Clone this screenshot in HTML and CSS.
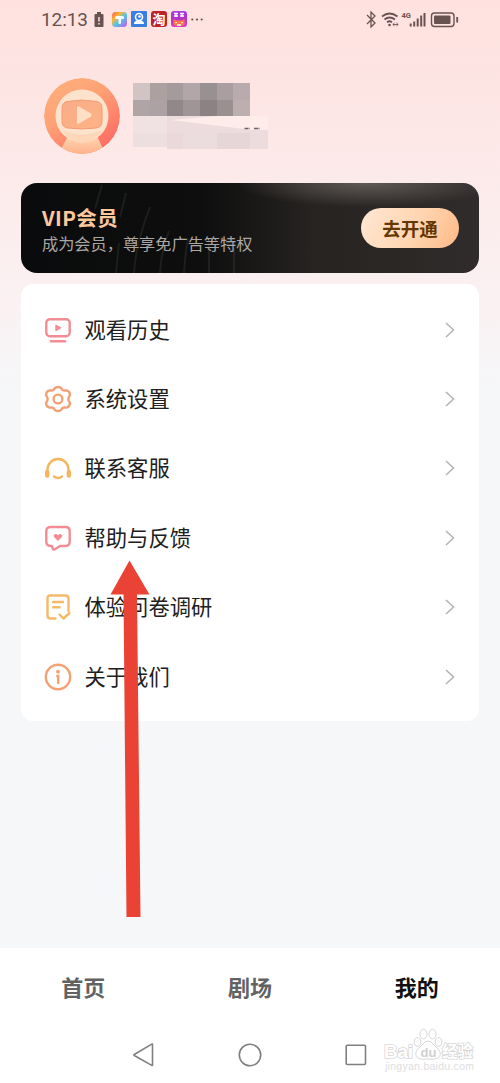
FILE: index.html
```html
<!DOCTYPE html>
<html lang="zh-CN">
<head>
  <meta charset="UTF-8">
  <title>我的</title>
  <link rel="stylesheet" href="styles.css">
</head>
<body>
  <div class="phone">
    <!-- Status bar -->
    <div class="status-bar">
      <div class="status-left">
        <span class="time">12:13</span>
        <svg class="low-battery" width="10" height="15" viewBox="0 0 10 15">
          <path d="M3 0h4v2h1.500q1 0 1 1v11q0 1-1 1h-7q-1 0-1-1V3q0-1 1-1H3z" fill="#685351"/>
          <path d="M5 5v4.500M5 11v1.500" stroke="#fde4e1" stroke-width="1.500"/>
        </svg>
        <svg class="app" width="15" height="15" viewBox="0 0 15 15">
          <defs>
            <linearGradient id="rainbow" x1="0" y1="0" x2="1" y2="1">
              <stop offset="0" stop-color="#ff5a5f"/>
              <stop offset=".3" stop-color="#ffb52e"/>
              <stop offset=".55" stop-color="#4cc7e8"/>
              <stop offset="1" stop-color="#d052ee"/>
            </linearGradient>
          </defs>
          <rect width="15" height="15" rx="3.500" fill="url(#rainbow)"/>
          <path d="M4.500 4h6q1.500 0 1.500 1.500v.5q0 1-1 1H9v4q0 1-1 1h-.500q-1 0-1-1V7H4q-1 0-1-1v-.500Q3 4 4.500 4z" fill="#fff"/>
        </svg>
        <svg class="app" width="16" height="16" viewBox="0 0 16 16">
          <rect width="16" height="16" rx="1" fill="#397ee3"/>
          <circle cx="8" cy="6" r="3.500" fill="none" stroke="#fff" stroke-width="1.600"/>
          <circle cx="8.500" cy="5.500" r="1.300" fill="#fff"/>
          <path d="M3 13q0-3 3-3.500h4q3 .5 3 3.500z" fill="#fff"/>
        </svg>
        <span class="app app-tao">淘</span>
        <svg class="app" width="16" height="16" viewBox="0 0 16 16">
          <defs>
            <linearGradient id="cat" x1="0" y1="0" x2="0" y2="1">
              <stop offset="0" stop-color="#a53be0"/>
              <stop offset=".5" stop-color="#b433c9"/>
              <stop offset="1" stop-color="#d841c0"/>
            </linearGradient>
          </defs>
          <rect width="16" height="16" rx="3" fill="url(#cat)"/>
          <path d="M3 2.500h4M3 5h4M5 2v4M9 2.500h4M9 5h4M11 2v4" stroke="#fff" stroke-width="1.300"/>
          <path d="M2.500 8l3 1.500h5l3-1.500v5q-1 2-5.500 2t-5.500-2z" fill="#ff754b"/>
          <path d="M4 12q1-1.500 2 0M10 12q1-1.500 2 0" stroke="#fff0c4" fill="none"/>
          <path d="M6 14h4" stroke="#fff" stroke-width="1.500"/>
        </svg>
        <svg class="more" width="12" height="3" viewBox="0 0 12 3" fill="#685351">
          <circle cx="1.300" cy="1.500" r="1.100"/><circle cx="6" cy="1.500" r="1.100"/><circle cx="10.700" cy="1.500" r="1.100"/>
        </svg>
      </div>
      <svg class="status-right" width="94" height="18" viewBox="0 0 94 18" fill="none" stroke="#685351">
        <path d="M2 5l8 8-4 4V2l4 4-8 8" stroke-width="1.300"/>
        <g stroke-width="1.800">
          <path d="M17 6.500q7.500-6 15.500 0M19.500 9.500q5-4 10.500 0M22 12.300q2.800-2 5 0"/>
        </g>
        <circle cx="24.500" cy="15" r="1.300" fill="#685351" stroke="none"/>
        <path d="M28 14.500h5M29.500 13l-1.700 1.500 1.700 1.500M31.500 13l1.700 1.500-1.700 1.500" stroke-width=".9"/>
        <text x="36.500" y="7.500" class="net">4G</text>
        <path d="M45.700 13.500v3M49.200 11.500v5M52.700 8.500v8M56.200 5.500v11M59.500 3v13.500" stroke-width="2"/>
        <rect x="66.500" y="3" width="22.500" height="13.500" rx="3" stroke-width="1.400"/>
        <rect x="69" y="5.500" width="16.500" height="8.500" rx="1" fill="#685351" stroke="none"/>
        <path d="M92.200 7v5.500" stroke-width="1.800"/>
      </svg>
    </div>

    <!-- Profile -->
    <div class="profile">
      <svg class="avatar" width="76" height="76" viewBox="0 0 76 76">
        <defs>
          <linearGradient id="ring" x1="0" y1="0" x2=".7" y2="1">
            <stop offset="0" stop-color="#ffb27d"/>
            <stop offset=".45" stop-color="#fea276"/>
            <stop offset="1" stop-color="#fe6c63"/>
          </linearGradient>
          <linearGradient id="neck" x1="0" y1="0" x2="0" y2="1">
            <stop offset="0" stop-color="#fed5b4"/>
            <stop offset="1" stop-color="#feb087"/>
          </linearGradient>
          <linearGradient id="face" x1="0" y1="0" x2="1" y2="1">
            <stop offset="0" stop-color="#f8ad88"/>
            <stop offset="1" stop-color="#ffb285"/>
          </linearGradient>
          <clipPath id="round"><circle cx="38" cy="38" r="38"/></clipPath>
        </defs>
        <g clip-path="url(#round)">
          <circle cx="38" cy="38" r="38" fill="url(#ring)"/>
          <path d="M24 58h29l6 13q-9 6-21 6t-21-6z" fill="url(#neck)"/>
          <circle cx="38" cy="38" r="26.500" fill="#fee3cc"/>
          <path d="M18 52q20 9 40 0-7 12.500-20 12.500T18 52z" fill="#fed6b8"/>
          <path d="M23 23.500q15-3 30 0 5 1 5 7v13q0 6-6 6.500-14 2-28 0-6-.5-6-6.500v-13q0-6 5-7z" fill="url(#face)" stroke="#f29b77"/>
          <path d="M33 29.500q0-2 2-1L47 35.500q1.500 1.500 0 3L35 45.500q-2 1-2-1z" fill="#ffe0c5"/>
        </g>
      </svg>
      <!-- Masked nickname and id -->
      <svg class="masked" width="136" height="68" viewBox="0 0 136 68">
        <rect x="0" y="1" width="17" height="17" fill="#d2c3c4"/>
        <rect x="17" y="1" width="17" height="17" fill="#aca0a1"/>
        <rect x="34" y="1" width="16" height="17" fill="#a69b9c"/>
        <rect x="50" y="1" width="17" height="17" fill="#b3a6a8"/>
        <rect x="67" y="1" width="17" height="17" fill="#999091"/>
        <rect x="84" y="1" width="16" height="17" fill="#aa9ea0"/>
        <rect x="100" y="1" width="17" height="17" fill="#b9abad"/>
        <rect x="0" y="18" width="17" height="16" fill="#b0a5a6"/>
        <rect x="17" y="18" width="17" height="16" fill="#ada1a3"/>
        <rect x="34" y="18" width="16" height="16" fill="#928889"/>
        <rect x="50" y="18" width="17" height="16" fill="#9f9496"/>
        <rect x="67" y="18" width="17" height="16" fill="#8c8283"/>
        <rect x="84" y="18" width="16" height="16" fill="#9a9092"/>
        <rect x="100" y="18" width="17" height="16" fill="#bdaeb0"/>
        <rect x="0" y="34" width="34" height="17" fill="#f0e1e2"/>
        <rect x="34" y="34" width="83" height="17" fill="#ecdcde"/>
        <rect x="0" y="51" width="34" height="14" fill="#eddfe0"/>
        <rect x="34" y="51" width="16" height="16" fill="#e9d9db"/>
        <rect x="50" y="51" width="34" height="16" fill="#ebdcdd"/>
        <rect x="84" y="51" width="33" height="16" fill="#e7d6d8"/>
        <rect x="117" y="48" width="18" height="19" fill="#ecdcde"/>
        <path d="M38 38L84 34h51v14l-24-1z" fill="#fdecea"/>
        <path d="M111.500 46.500h5M121 46.500h5.500" stroke="#6b6465" stroke-width="1.300" stroke-dasharray="4 .5"/>
      </svg>
    </div>

    <!-- VIP banner -->
    <div class="vip">
      <svg class="vip-rays" width="458" height="90" viewBox="0 0 458 90" fill="none" stroke="#fff" stroke-opacity=".07" stroke-width="2">
        <path d="M81 2L74 26M105 10L99 34M129 24Q115 60 113 90M98 60l-3 30M148 48q-8 20-9 42M167 55q-3 18-4 35M188 60v30M213 65v25"/>
      </svg>
      <div class="vip-text">
        <div class="vip-title">VIP会员</div>
        <div class="vip-subtitle">成为会员，尊享免广告等特权</div>
      </div>
      <button type="button" class="vip-btn">去开通</button>
    </div>

    <!-- Menu -->
    <div class="menu">
      <div class="item">
        <svg class="icon" viewBox="0 0 28 28" fill="none" stroke="#f28d96" stroke-width="2.400" stroke-linecap="round">
          <rect x="2.300" y="3.300" width="23.400" height="17" rx="3.500"/>
          <path d="M7 25.300h14"/>
          <path d="M12 9.300v5l4.500-2.500z" fill="#f28d96" stroke-width="1.500" stroke-linejoin="round"/>
        </svg>
        <span class="label">观看历史</span>
        <svg class="chevron" viewBox="0 0 10 16"><path d="M1 1l7.500 7L1 15"/></svg>
      </div>
      <div class="item">
        <svg class="icon" viewBox="0 0 28 28" fill="none" stroke="#f3a077" stroke-width="2.400" stroke-linejoin="round">
          <path d="M11 3Q14 .8 17 3l1.500 2q1 .7 2.300.5l1.700-.1q3.200.6 3.500 4.600l-1.300 2.400q-.7 1.600 0 3.200L26 18q-.3 4-3.500 4.600l-1.700-.1q-1.300-.2-2.300.5L17 25q-3 2.200-6 0l-1.500-2q-1-.7-2.300-.5l-1.700.1Q2.300 22 2 18l1.300-2.400q.7-1.600 0-3.200L2 10q.3-4 3.500-4.600l1.700.1q1.300.2 2.300-.5z"/>
          <circle cx="14" cy="14" r="4.400"/>
        </svg>
        <span class="label">系统设置</span>
        <svg class="chevron" viewBox="0 0 10 16"><path d="M1 1l7.500 7L1 15"/></svg>
      </div>
      <div class="item">
        <svg class="icon" viewBox="0 0 28 28" fill="none" stroke="#f6b45c" stroke-width="2.300" stroke-linecap="round">
          <path d="M3.500 18v-2.500a10.500 10.500 0 0 1 21 0V18"/>
          <path d="M3.200 18v3.500M24.800 18v3.500" stroke-width="4.400"/>
          <path d="M10 22.500q4 3 8 0"/>
        </svg>
        <span class="label">联系客服</span>
        <svg class="chevron" viewBox="0 0 10 16"><path d="M1 1l7.500 7L1 15"/></svg>
      </div>
      <div class="item">
        <svg class="icon" viewBox="0 0 28 28" fill="none" stroke="#f28d96" stroke-width="2.400" stroke-linejoin="round">
          <path d="M6.500 3h15q4.200 0 4.200 4.200v10.600q0 4.200-4.200 4.200H16l-5.500 3.500Q9 26 8.700 24.500L8 22H6.500q-4.200 0-4.200-4.200V7.200Q2.300 3 6.500 3z"/>
          <path d="M14 17l-4-4q-1-2.500 1.500-3 1.500 0 2.500 1.300Q15 10 16.500 10q2.500.5 1.500 3z" fill="#f28d96" stroke="none"/>
        </svg>
        <span class="label">帮助与反馈</span>
        <svg class="chevron" viewBox="0 0 10 16"><path d="M1 1l7.500 7L1 15"/></svg>
      </div>
      <div class="item">
        <svg class="icon" viewBox="0 0 28 28" fill="none" stroke="#f5b968" stroke-width="2.400" stroke-linecap="round" stroke-linejoin="round">
          <path d="M11.500 25.500H6.500q-3 0-3-3V5.500q0-3 3-3h15q3 0 3 3V18"/>
          <path d="M9 9h10M9 14.200h6.500M15.500 21.500l4 4 6-5.500"/>
        </svg>
        <span class="label">体验问卷调研</span>
        <svg class="chevron" viewBox="0 0 10 16"><path d="M1 1l7.500 7L1 15"/></svg>
      </div>
      <div class="item">
        <svg class="icon" viewBox="0 0 28 28" fill="none" stroke="#f3a273" stroke-width="2.400" stroke-linecap="round">
          <circle cx="14" cy="14" r="12.200"/>
          <circle cx="14" cy="8.700" r="1.900" fill="#f3a273" stroke="none"/>
          <path d="M13.300 13h.9v7" stroke-width="2.500"/>
        </svg>
        <span class="label">关于我们</span>
        <svg class="chevron" viewBox="0 0 10 16"><path d="M1 1l7.500 7L1 15"/></svg>
      </div>
    </div>

    <!-- Tabs and system navigation -->
    <div class="bottom">
      <div class="tabs">
        <div class="tab">首页</div>
        <div class="tab">剧场</div>
        <div class="tab active">我的</div>
      </div>
      <div class="sys-nav">
        <svg viewBox="0 0 24 24"><path d="M21.500 1.500v20.500q0 .8-.8.400L3.300 12.500q-.8-.5 0-1L20.700 1.100q.8-.4.8.4z"/></svg>
        <svg viewBox="0 0 24 24"><circle cx="12" cy="12" r="10.700"/></svg>
        <svg viewBox="0 0 24 24"><rect x="2.200" y="2.200" width="19.300" height="19.300" rx="1"/></svg>
      </div>
    </div>

    <svg class="arrow" width="42" height="359" viewBox="0 0 42 359">
      <path d="M20.500 0.500L40.500 34.500H28L31.500 357H17.500L14.500 34.500H1.500z" fill="#ea4335"/>
    </svg>

    <svg class="watermark" width="100" height="50" viewBox="0 0 100 50">
      <g fill="#fff" stroke="#d8d8d8">
        <ellipse cx="35.500" cy="17" rx="3.300" ry="4.300"/>
        <ellipse cx="41.500" cy="9" rx="3.500" ry="4.800"/>
        <ellipse cx="50.500" cy="9" rx="3.500" ry="4.800"/>
        <ellipse cx="56.500" cy="17" rx="3.300" ry="4.300"/>
        <path d="M46 16q3 0 6 4l5 5q3 5-1 8-3 2-10 1-7 1-10-1-4-3-1-8l5-5q3-4 6-4z"/>
      </g>
      <g class="wm-outline">
        <text x="2" y="33" class="wm-bai" textLength="29">Bai</text>
        <text x="60" y="32" class="wm-cn">经验</text>
      </g>
      <text x="38.500" y="31.500" class="wm-du">du</text>
      <text x="3" y="45" class="wm-url" textLength="89">jingyan.baidu.com</text>
    </svg>
  </div>
</body>
</html>
```

FILE: styles.css
```css
:root {
  --color-bg: #f5f7f9;
  --color-text: #202020;
  --color-status: #685351;
  --color-gold: #ffc79c;
}
* { box-sizing: border-box; margin: 0; padding: 0; }
body {
  font-family: "Noto Sans CJK SC", sans-serif;
  color: var(--color-text);
}
.phone {
  position: relative; width: 500px; height: 1083px; overflow: hidden;
  display: flex; flex-direction: column;
  background: linear-gradient(180deg, #ffe2df 0, #fde5e3 90px, #fcebeb 190px, #faf1f2 300px, var(--color-bg) 395px);
}
svg { display: block; flex: none; }

/* Status bar */
.status-bar {
  height: 38px; padding: 0 41px;
  display: flex; align-items: center; justify-content: space-between;
}
.status-left { display: flex; align-items: center; gap: 4px; }
.time {
  font: 19px/20px Roboto, sans-serif; color: var(--color-status);
  width: 49px; padding-top: 2px; letter-spacing: -.1px; white-space: nowrap;
}
.low-battery { margin-right: 4px; }
.app-tao {
  width: 16px; height: 16px; border-radius: 3px;
  background: #bd2228; color: #fff;
  font-size: 13px; line-height: 15px; font-weight: bold; text-align: center;
}
.more { margin-left: 0; }
.net { font: bold 7.5px Roboto, sans-serif; fill: var(--color-status); stroke: none; }

/* Profile */
.profile {
  height: 145px; padding: 40px 0 0 44px;
  display: flex; gap: 13px;
}
.masked { margin-top: 4px; }

/* VIP banner */
.vip {
  position: relative; flex: none;
  width: 458px; height: 90px; margin-left: 21px;
  padding: 0 20px 0 21px; border-radius: 16px; overflow: hidden;
  display: flex; align-items: center; justify-content: space-between;
  background:
    radial-gradient(ellipse 130px 24px at 345px 0, rgba(150,142,136,.5), transparent),
    linear-gradient(90deg, #0a0b0c 0, #0e0e0e 180px, #262321 290px, #302c2b 458px);
}
.vip-rays { position: absolute; left: 0; top: 0; }
.vip-text { position: relative; padding-top: 4px; }
.vip-title {
  font-size: 20.5px; line-height: 26px; font-weight: bold;
  letter-spacing: .4px; color: var(--color-gold);
}
.vip-subtitle { font-size: 16.2px; line-height: 26px; color: #aaa6a3; }
.vip-btn {
  position: relative; width: 98px; height: 40px;
  border: none; border-radius: 20px;
  background: linear-gradient(115deg, #ffe7d3, #ffd5b1 55%, #ffb987);
  font-family: inherit; font-size: 18.5px; font-weight: bold; color: #653600;
}

/* Menu */
.menu {
  flex: none; width: 458px; margin: 11px 0 0 21px; padding: 11px 0 10px;
  background: #fff; border-radius: 12px;
}
.item {
  height: 69.4px; padding: 0 24px 0 23px;
  display: flex; align-items: center;
}
.icon { width: 28px; height: 28px; }
.label {
  flex: 1; margin-left: 12.5px; padding-bottom: 2px;
  font-size: 21.3px; line-height: 32px;
}
.chevron { width: 10px; height: 16px; fill: none; stroke: #b4b4b4; stroke-width: 1.6; }

/* Bottom */
.bottom { height: 135px; margin-top: auto; background: #fff; }
.tabs { display: flex; height: 78px; padding-bottom: 3px; align-items: center; }
.tab {
  flex: 1; text-align: center;
  font-size: 22px; line-height: 32px; font-weight: bold; color: #606264;
}
.tab.active { color: #111; }
.sys-nav {
  height: 58px; padding-left: 131px;
  display: flex; align-items: center; gap: 82.5px;
}
.sys-nav svg { width: 24px; height: 24px; fill: none; stroke: #808080; stroke-width: 1.6; }

.arrow { position: absolute; left: 109px; top: 560px; }

/* Watermark */
.watermark { position: absolute; left: 382px; top: 1025px; }
.wm-outline { fill: #fff; stroke: #d8d8d8; stroke-width: 1.6; paint-order: stroke; }
.wm-bai { font: bold 19px "Liberation Sans", sans-serif; }
.wm-du { font: bold 13px "Liberation Sans", sans-serif; fill: #d0d0d0; }
.wm-cn { font: bold 15.5px "Noto Sans CJK SC", sans-serif; }
.wm-url { font: 10.5px "Liberation Sans", sans-serif; fill: #dedede; }
```
